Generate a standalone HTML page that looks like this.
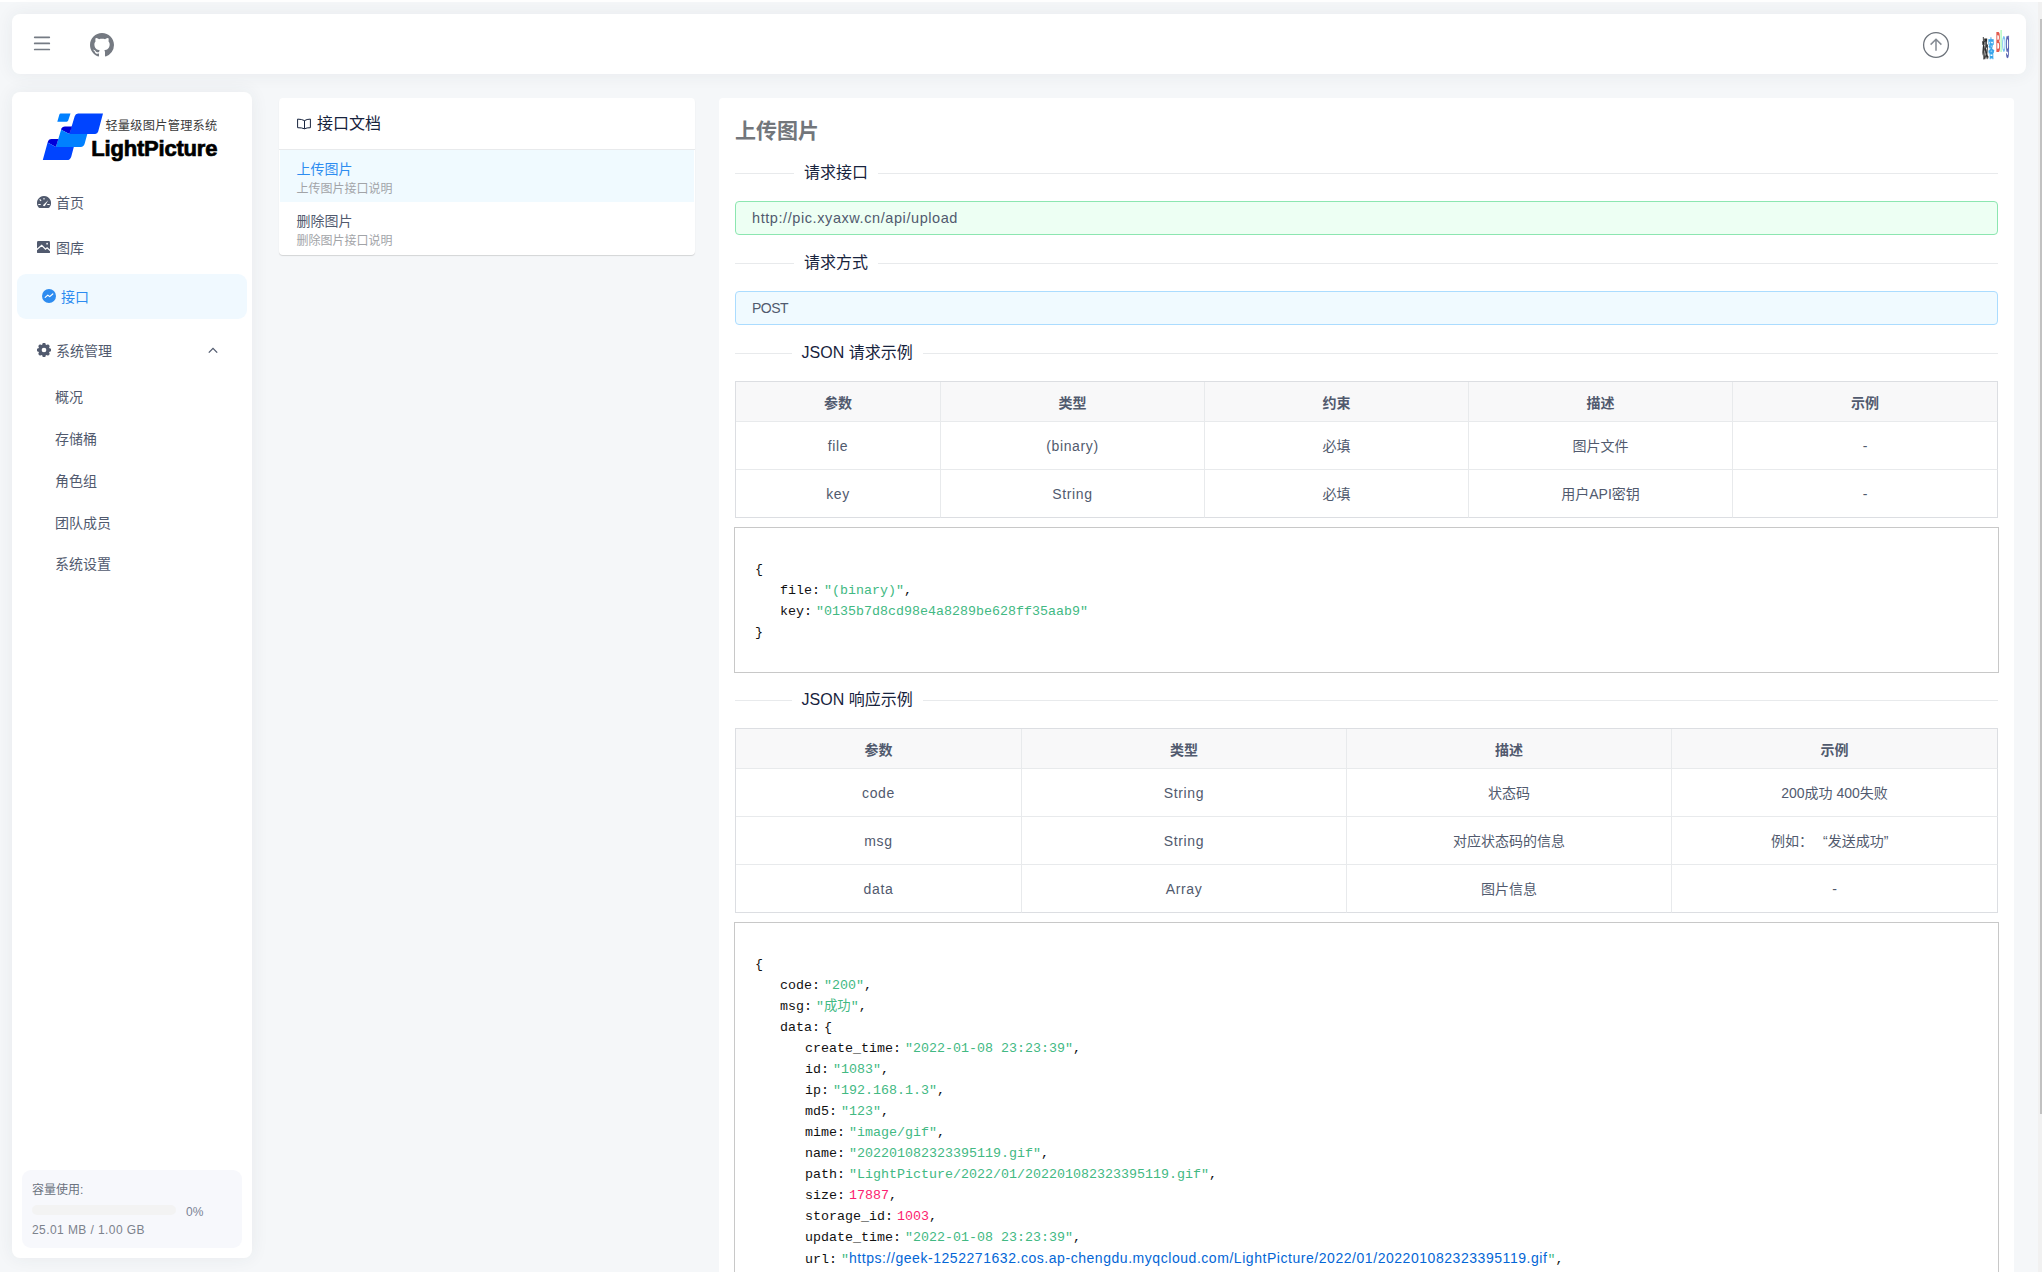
<!DOCTYPE html>
<html lang="zh-CN">
<head>
<meta charset="utf-8">
<title>LightPicture - 接口文档</title>
<style>
*{box-sizing:border-box;margin:0;padding:0}
html,body{width:2042px;height:1272px;overflow:hidden}
body{position:relative;background:#f5f7f9;font-family:"Liberation Sans","Noto Sans CJK SC",sans-serif;font-size:14px;color:#515a6e;line-height:1.5}
.abs{position:absolute}
#topstrip{left:0;top:0;width:2042px;height:2px;background:#fff}
#topbar{left:12px;top:14px;width:2014px;height:60px;background:#fff;border-radius:8px;box-shadow:0 0 18px rgba(40,50,70,.07)}
#sidebar{left:12px;top:92px;width:240px;height:1166px;background:#fff;border-radius:8px;box-shadow:0 0 18px rgba(40,50,70,.07)}
#doclist{left:279px;top:98px;width:416px;height:157px;background:#fff;border-radius:4px;box-shadow:0 1px 1px rgba(0,0,0,.14)}
#main{left:719px;top:98px;width:1295px;height:1200px;background:#fff;border-radius:4px}
#sbtrack{left:2038px;top:2px;width:4px;height:1270px;background:#f1f1f1}
#sbthumb{left:2040px;top:19px;width:2px;height:1095px;background:#c1c1c1}
/* text helper: a line box of given height, text vertically centred */
.t{position:absolute;white-space:nowrap;line-height:1}
.mi{font-size:14px;line-height:20px;color:#515a6e}
.dl{height:1px;background:#e8eaec}
.dv{font-size:16px;line-height:24px;color:#17233d}
.al{width:1263px;height:34px;border:1px solid;border-radius:4px;padding-left:16px;line-height:32px;font-size:14px;color:#515a6e;white-space:nowrap}
.tb{display:grid;border-left:1px solid #dcdee2;border-top:1px solid #dcdee2;font-size:14px;color:#515a6e;text-align:center}
.tb>div{border-right:1px solid #e8eaec;border-bottom:1px solid #e8eaec;white-space:nowrap}
.tb .th{height:40px;line-height:42px;background:#f8f8f9;font-weight:700}
.tb .td{height:48px;line-height:49px}
.tb .lt{letter-spacing:.65px}
.tb .lc{border-right-color:#dcdee2}
.tb .lr{border-bottom-color:#dcdee2}
.cb{width:1265px;border:1px solid #c8c8c8;padding:31px 20px 29px;font-family:"Liberation Mono","Noto Sans CJK SC",monospace;font-size:13.33px;color:#111;background:#fff}
.cb .ln{height:21px;line-height:21px;white-space:pre}
.cb .k{margin-right:4px}
.cb .s{color:#42b983}
.cb .n{color:#fc1e70}
.cb .a{color:#0366d6;font-family:"Liberation Sans",sans-serif;font-size:14px;letter-spacing:.546px}
</style>
</head>
<body>
<div id="topstrip" class="abs"></div>
<div id="topbar" class="abs">
<svg class="abs" style="left:20px;top:20px" width="20" height="20" viewBox="0 0 20 20"><path d="M2.7 3.3h14.6M2.7 9.4h14.6M2.7 15.5h14.6" stroke="#757b84" stroke-width="1.7" stroke-linecap="round" fill="none"/></svg>
<svg class="abs" style="left:78px;top:19px" width="24" height="24" viewBox="0 0 16 16"><path fill="#757a82" d="M8 0C3.58 0 0 3.58 0 8c0 3.54 2.29 6.53 5.47 7.59.4.07.55-.17.55-.38 0-.19-.01-.82-.01-1.49-2.01.37-2.53-.49-2.69-.94-.09-.23-.48-.94-.82-1.13-.28-.15-.68-.52-.01-.53.63-.01 1.08.58 1.23.82.72 1.21 1.87.87 2.33.66.07-.52.28-.87.51-1.07-1.78-.2-3.64-.89-3.64-3.95 0-.87.31-1.59.82-2.15-.08-.2-.36-1.02.08-2.12 0 0 .67-.21 2.2.82.64-.18 1.32-.27 2-.27.68 0 1.36.09 2 .27 1.53-1.04 2.2-.82 2.2-.82.44 1.1.16 1.92.08 2.12.51.56.82 1.27.82 2.15 0 3.07-1.87 3.75-3.65 3.95.29.25.54.73.54 1.48 0 1.07-.01 1.93-.01 2.2 0 .21.15.46.55.38A8.013 8.013 0 0016 8c0-4.42-3.58-8-8-8z"/></svg>
<svg class="abs" style="left:1910px;top:17px" width="28" height="28" viewBox="0 0 28 28"><circle cx="14" cy="14" r="12.4" fill="none" stroke="#6c727a" stroke-width="1.3"/><path d="M14 19.8V8.8M8.6 13.6L14 8.3l5.4 5.3" fill="none" stroke="#858b93" stroke-width="1.5"/></svg>
<div id="avatar" class="abs" style="left:1968px;top:14px;width:32px;height:32px;overflow:hidden;filter:blur(.35px)">
<span class="abs" style="left:1.6px;top:8.5px;font-size:23px;line-height:24px;font-weight:700;white-space:nowrap;transform-origin:0 0;transform:scaleX(.26) skewX(6deg)"><span style="color:#2b2b2b;-webkit-text-stroke:.8px #2b2b2b">极</span><span style="color:#3aa5ea;-webkit-text-stroke:.4px #3aa5ea">客</span></span>
<span class="abs" style="left:15.6px;top:-1px;font-size:30px;line-height:30px;font-weight:700;white-space:nowrap;transform-origin:0 0;transform:scaleX(.2)"><span style="color:#e25a4e">B</span><span style="color:#8af59a">l</span><span style="color:#7cc4f0">o</span><span style="color:#5560b0;-webkit-text-stroke:.4px #5560b0">g</span></span>
</div>
</div>
<div id="sidebar" class="abs">
<svg class="abs" style="left:26px;top:16px" width="70" height="54" viewBox="38 108 70 54">
<path d="M60.6 113.4h9.9l-2.3 7.2q-.35 1.1-1.5 1.1h-9.4l2-6.9q.4-1.4 1.3-1.4z" fill="#0080ff"/>
<path d="M74.7 116.2q.8-2.8 3.4-2.8H103l-4.8 18.2q-.65 2.4-3 2.4H69.4z" fill="#0044ff"/>
<path d="M61.1 129.7q.9-3.3 3.9-3.3h7L69.4 134z" fill="#0000d8"/>
<path d="M61.1 129.7L69.4 134h17.9l-2.6 9.6q-.9 3.4-4 3.4H55.9z" fill="#0080ff"/>
<path d="M47.6 142.5q.9-3.4 3.9-3.4h6.9l-2.5 7.9z" fill="#0000d8"/>
<path d="M47.6 142.5l8.3 4.5h17.9l-2.5 9.4q-1 3.6-4.3 3.6H42.8z" fill="#0044ff"/>
</svg>
<div class="t" id="lg1" style="left:93.4px;top:26px;font-size:12.2px;line-height:16px;letter-spacing:.27px;color:#3a3a3a">轻量级图片管理系统</div>
<div class="t" id="lg2" style="left:79.3px;top:42.5px;font-size:22px;line-height:28px;font-weight:700;color:#000;letter-spacing:-.2px;-webkit-text-stroke:.7px #000">LightPicture</div>

<svg class="abs" style="left:25px;top:104px" width="14" height="14" viewBox="0 0 14 14"><path d="M7 0a7 7 0 0 0-5.7 11.1c.3.6.7 1 1.4 1h8.6c.7 0 1.1-.4 1.4-1A7 7 0 0 0 7 0z" fill="#515a6e"/><path d="M7 2v1.6M2.7 3.4l1.4 1.5M1.3 8.5h2.4M10.3 8.5h2.4" stroke="#fff" stroke-width="1.1" fill="none"/><path d="M11.2 4.2L8 9.7a1.05 1.05 0 0 1-1.9-.8z" fill="#fff"/></svg>
<div class="t mi" style="left:44px;top:101px">首页</div>
<svg class="abs" style="left:25.4px;top:148.6px" width="13" height="12.4" viewBox="0 0 13 12.4"><rect width="13" height="12.4" rx="1.3" fill="#515a6e"/><path d="M-.5 8.8L4.7 4.3l3.8 3.9 1.6-1.4 3.4 3" stroke="#fff" stroke-width="1.25" fill="none"/><circle cx="10.1" cy="2.7" r=".85" fill="#fff"/></svg>
<div class="t mi" style="left:44px;top:146px">图库</div>
<div class="abs" style="left:5px;top:182px;width:230px;height:45px;border-radius:9px;background:#f0f9ff"></div>
<svg class="abs" style="left:30px;top:197px" width="14" height="14" viewBox="0 0 14 14"><circle cx="7" cy="7" r="7" fill="#2d8cf0"/><path d="M3.2 8.4l2.6-2.3 1.9 1.5 3.1-2.6" stroke="#fff" stroke-width="1.2" fill="none" stroke-linejoin="round" stroke-linecap="round"/></svg>
<div class="t mi" style="left:49px;top:195px;color:#2d8cf0">接口</div>
<svg class="abs" style="left:25px;top:251px" width="14" height="14" viewBox="0 0 14 14"><path fill-rule="evenodd" fill="#515a6e" d="M5.34 1.49 L5.71 0.02 L8.29 0.02 L8.66 1.49 L9.72 1.94 L11.03 1.15 L12.85 2.97 L12.06 4.28 L12.51 5.34 L13.98 5.71 L13.98 8.29 L12.51 8.66 L12.06 9.72 L12.85 11.03 L11.03 12.85 L9.72 12.06 L8.66 12.51 L8.29 13.98 L5.71 13.98 L5.34 12.51 L4.28 12.06 L2.97 12.85 L1.15 11.03 L1.94 9.72 L1.49 8.66 L0.02 8.29 L0.02 5.71 L1.49 5.34 L1.94 4.28 L1.15 2.97 L2.97 1.15 L4.28 1.94Z M4.65 7.00 a2.35 2.35 0 1 0 4.70 0 a2.35 2.35 0 1 0 -4.70 0Z"/></svg>
<div class="t mi" style="left:44px;top:249px">系统管理</div>
<svg class="abs" style="left:195px;top:254px" width="12" height="8" viewBox="0 0 12 8"><path d="M1.8 6.6L6 2.4l4.2 4.2" stroke="#515a6e" stroke-width="1.3" fill="none"/></svg>
<div class="t mi" style="left:43px;top:295px">概况</div>
<div class="t mi" style="left:43px;top:337px">存储桶</div>
<div class="t mi" style="left:43px;top:379px">角色组</div>
<div class="t mi" style="left:43px;top:421px">团队成员</div>
<div class="t mi" style="left:43px;top:462px">系统设置</div>

<div class="abs" style="left:10px;top:1078px;width:220px;height:78px;border-radius:9px;background:#f7f8fc"></div>
<div class="t" style="left:20px;top:1089px;font-size:12px;line-height:18px;color:#6b7380">容量使用:</div>
<div class="abs" style="left:20px;top:1113px;width:144px;height:9.5px;border-radius:5px;background:#f3f3f3"></div>
<div class="t" style="left:174px;top:1111px;font-size:12px;line-height:18px;color:#7a8294">0%</div>
<div class="t" style="left:20px;top:1129px;font-size:12px;line-height:18px;color:#7c828c;letter-spacing:.42px">25.01 MB / 1.00 GB</div>
</div>
<div id="doclist" class="abs">
<svg class="abs" style="left:18px;top:20px" width="14" height="11.5" viewBox="0 0 14 11.5"><path d="M7.5 2.6v8.2M.6 1.1Q4.8 1.2 7.5 2.6Q9.8 1.2 13.4 1.1V9.7Q9.8 9.6 7.5 10.8Q4.8 9.6.6 9.7z" fill="none" stroke="#17233d" stroke-width="1" stroke-linejoin="round"/></svg>
<div class="t" style="left:38px;top:14px;font-size:16px;line-height:24px;color:#17233d">接口文档</div>
<div class="abs" style="left:0;top:51px;width:416px;height:1px;background:#e8eaec"></div>
<div class="abs" style="left:1px;top:52px;width:414px;height:52px;background:#f0faff"></div>
<div class="t" style="left:17.5px;top:59px;font-size:14px;line-height:24px;color:#2d8cf0">上传图片</div>
<div class="t" style="left:17.5px;top:83px;font-size:12px;line-height:16px;color:#a2a4a8">上传图片接口说明</div>
<div class="t" style="left:17.5px;top:111px;font-size:14px;line-height:24px;color:#515a6e">删除图片</div>
<div class="t" style="left:17.5px;top:135px;font-size:12px;line-height:16px;color:#a2a4a8">删除图片接口说明</div>
</div>
<div id="main" class="abs"><div class="t" id="ttl" style="left:16px;top:17px;font-size:21px;line-height:32px;font-weight:700;color:#72767b">上传图片</div><div class="abs dl" style="left:16px;top:75px;width:59.0px"></div><div class="t dv" style="left:85.0px;top:63px">请求接口</div><div class="abs dl" style="left:158.9px;top:75px;width:1120.0px"></div><div class="abs al" style="left:16px;top:103px;border-color:#8ce6b0;background:#edfff3;font-size:14.5px;letter-spacing:.58px">http://pic.xyaxw.cn/api/upload</div><div class="abs dl" style="left:16px;top:165px;width:59.0px"></div><div class="t dv" style="left:85.0px;top:153px">请求方式</div><div class="abs dl" style="left:158.9px;top:165px;width:1120.0px"></div><div class="abs al" style="left:16px;top:193px;border-color:#abdcff;background:#f0faff;letter-spacing:-.5px">POST</div><div class="abs dl" style="left:16px;top:255px;width:56.6px"></div><div class="t dv" style="left:82.6px;top:243px">JSON 请求示例</div><div class="abs dl" style="left:203.7px;top:255px;width:1075.3px"></div><div class="abs tb" style="left:16px;top:283px;grid-template-columns:205px 264px 264px 264px 265px"><div class="th">参数</div><div class="th">类型</div><div class="th">约束</div><div class="th">描述</div><div class="th lc">示例</div><div class="td lt">file</div><div class="td lt">(binary)</div><div class="td">必填</div><div class="td">图片文件</div><div class="td lc">-</div><div class="td lr lt">key</div><div class="td lr lt">String</div><div class="td lr">必填</div><div class="td lr">用户API密钥</div><div class="td lc lr">-</div></div><div class="abs cb" style="left:15px;top:429px"><div class="ln" style="padding-left:0px">{</div><div class="ln" style="padding-left:25px"><span class="k">file:</span><span class="s">"(binary)"</span>,</div><div class="ln" style="padding-left:25px"><span class="k">key:</span><span class="s">"0135b7d8cd98e4a8289be628ff35aab9"</span></div><div class="ln" style="padding-left:0px">}</div></div><div class="abs dl" style="left:16px;top:602px;width:56.6px"></div><div class="t dv" style="left:82.6px;top:590px">JSON 响应示例</div><div class="abs dl" style="left:203.7px;top:602px;width:1075.3px"></div><div class="abs tb" style="left:16px;top:630px;grid-template-columns:286px 325px 325px 326px"><div class="th">参数</div><div class="th">类型</div><div class="th">描述</div><div class="th lc">示例</div><div class="td lt">code</div><div class="td lt">String</div><div class="td">状态码</div><div class="td lc">200成功 400失败</div><div class="td lt">msg</div><div class="td lt">String</div><div class="td">对应状态码的信息</div><div class="td lc" style="padding-right:9.5px">例如：<span style="margin-left:10px">“发送成功”</span></div><div class="td lr lt">data</div><div class="td lr lt">Array</div><div class="td lr">图片信息</div><div class="td lc lr">-</div></div><div class="abs cb" style="left:15px;top:824px"><div class="ln" style="padding-left:0px">{</div><div class="ln" style="padding-left:25px"><span class="k">code:</span><span class="s">"200"</span>,</div><div class="ln" style="padding-left:25px"><span class="k">msg:</span><span class="s">"成功"</span>,</div><div class="ln" style="padding-left:25px"><span class="k">data:</span>{</div><div class="ln" style="padding-left:50px"><span class="k">create_time:</span><span class="s">"2022-01-08 23:23:39"</span>,</div><div class="ln" style="padding-left:50px"><span class="k">id:</span><span class="s">"1083"</span>,</div><div class="ln" style="padding-left:50px"><span class="k">ip:</span><span class="s">"192.168.1.3"</span>,</div><div class="ln" style="padding-left:50px"><span class="k">md5:</span><span class="s">"123"</span>,</div><div class="ln" style="padding-left:50px"><span class="k">mime:</span><span class="s">"image/gif"</span>,</div><div class="ln" style="padding-left:50px"><span class="k">name:</span><span class="s">"202201082323395119.gif"</span>,</div><div class="ln" style="padding-left:50px"><span class="k">path:</span><span class="s">"LightPicture/2022/01/202201082323395119.gif"</span>,</div><div class="ln" style="padding-left:50px"><span class="k">size:</span><span class="n">17887</span>,</div><div class="ln" style="padding-left:50px"><span class="k">storage_id:</span><span class="n">1003</span>,</div><div class="ln" style="padding-left:50px"><span class="k">update_time:</span><span class="s">"2022-01-08 23:23:39"</span>,</div><div class="ln" style="padding-left:50px"><span class="k">url:</span><span class="s">"<span class="a">https://geek-1252271632.cos.ap-chengdu.myqcloud.com/LightPicture/2022/01/202201082323395119.gif</span>"</span>,</div><div class="ln" style="padding-left:50px"><span class="k">user_id:</span><span class="n">1</span>,</div><div class="ln" style="padding-left:25px">}</div><div class="ln" style="padding-left:0px">}</div></div></div>
<div id="sbtrack" class="abs"></div>
<div id="sbthumb" class="abs"></div>
</body>
</html>
